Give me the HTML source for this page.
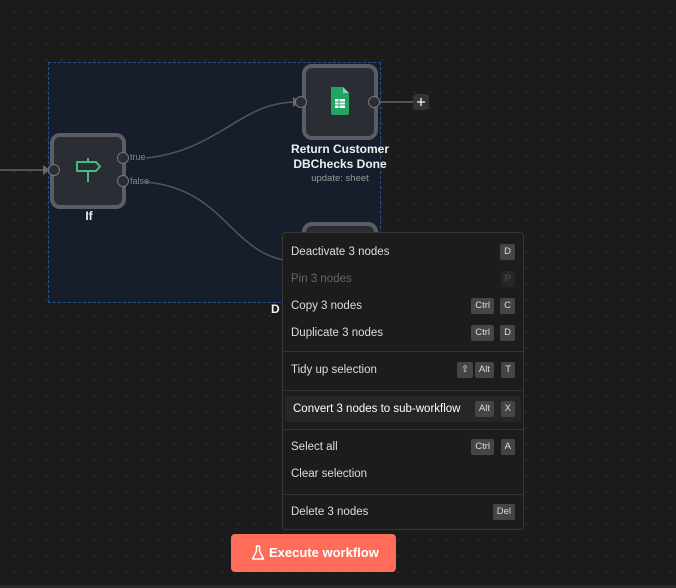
<!DOCTYPE html>
<html><head><meta charset="utf-8"><style>
*{margin:0;padding:0;box-sizing:border-box}
body{width:676px;height:588px;overflow:hidden;background:#1b1b1b;background-image:radial-gradient(#333 0.7px,transparent 1px);background-size:16px 16px;background-position:6px 4px;font-family:"Liberation Sans",sans-serif;position:relative}
.sel{position:absolute;left:48px;top:62px;width:333px;height:241px;background:rgba(22,30,46,.85);border:1px dashed #2a4f8f}
.node{position:absolute;width:76px;height:76px;border-radius:10px;background:#2a2d33;border:4px solid #5a5d63}
.h{position:absolute;width:12px;height:12px;border-radius:50%;background:#2a2d33;border:1.5px solid #777}
.lbl{position:absolute;color:#eee;font-weight:bold;font-size:12px;text-align:center}
.menu{position:absolute;left:282px;top:232px;width:242px;height:298px;background:#1c1c1c;border:1px solid #383838;border-radius:4px;font-size:11.5px;color:#ddd}
.it{position:absolute;left:0;right:0;height:26px;line-height:26px;padding-left:8px}
.k{position:absolute;top:5px;height:16px;line-height:16px;font-size:9.5px;background:#454545;color:#ddd;border-radius:2px;text-align:center;padding:0 4px}
.sep{position:absolute;left:0;right:0;height:1px;background:#333}
</style></head><body>
<div class="sel"></div>
<svg style="position:absolute;left:0;top:0" width="676" height="588">
<path d="M0 170 H46" stroke="#666" stroke-width="1.5" fill="none"/>
<path d="M43 165 L50 170 L43 175Z" fill="#666"/>
<path d="M146 158 C220 150,240 102,296 102" stroke="#555" stroke-width="1.5" fill="none"/>
<path d="M293 97 L301 102 L293 107Z" fill="#666"/>
<path d="M146 182 C230 190,230 260,300 262" stroke="#555" stroke-width="1.5" fill="none"/>
<path d="M380 102 H414" stroke="#666" stroke-width="1.5"/>
<rect x="413" y="94" width="16" height="16" rx="3" fill="#333"/>
<path d="M421 98 V106 M417 102 H425" stroke="#ddd" stroke-width="1.5"/>
</svg>
<div class="node" style="left:50px;top:133px"></div>
<div class="node" style="left:302px;top:64px"></div>
<div class="node" style="left:302px;top:222px"></div>
<div class="h" style="left:48px;top:164px"></div>
<div class="h" style="left:117px;top:152px"></div>
<div class="h" style="left:117px;top:175px"></div>
<div class="h" style="left:295px;top:96px"></div>
<div class="h" style="left:368px;top:96px"></div>
<span style="position:absolute;left:130px;top:152px;font-size:9px;color:#888">true</span>
<span style="position:absolute;left:130px;top:176px;font-size:9px;color:#888">false</span>
<svg style="position:absolute;left:75px;top:157px" width="28" height="26" viewBox="0 0 28 26"><path d="M2 5 H21 L25 9.5 L21 14 H2Z M13 1 V5 M13 14 V25" stroke="#3fbf7f" stroke-width="2" fill="none" stroke-linejoin="round"/></svg>
<svg style="position:absolute;left:329px;top:87px" width="22" height="28" viewBox="0 0 22 28"><path d="M2 0 H14 L20 6 V26 Q20 28 18 28 H4 Q2 28 2 26Z" fill="#21a464"/><path d="M14 0 V6 H20Z" fill="#8ed1b1"/><rect x="6" y="12" width="10" height="9" fill="#fff"/><path d="M6 15 H16 M6 18 H16 M10 12 V21" stroke="#21a464" stroke-width="1"/></svg>
<div class="lbl" style="left:60px;top:209px;width:58px">If</div>
<div class="lbl" style="left:280px;top:142px;width:120px;line-height:15px">Return Customer<br>DBChecks Done</div>
<div style="position:absolute;left:280px;top:173px;width:120px;text-align:center;font-size:9.5px;color:#999">update: sheet</div>
<div class="lbl" style="left:271px;top:302px">D</div>
<div class="menu">
<div class="it" style="top:3px;line-height:32px;height:32px">Deactivate 3 nodes<span class="k" style="right:8px;top:8px">D</span></div>
<div class="it" style="top:30px;line-height:32px;height:32px;color:#666">Pin 3 nodes<span class="k" style="right:8px;top:8px;background:#262626;color:#555">P</span></div>
<div class="it" style="top:57px;line-height:32px;height:32px">Copy 3 nodes<span class="k" style="right:29px;top:8px">Ctrl</span><span class="k" style="right:8px;top:8px">C</span></div>
<div class="it" style="top:84px;line-height:32px;height:32px">Duplicate 3 nodes<span class="k" style="right:29px;top:8px">Ctrl</span><span class="k" style="right:8px;top:8px">D</span></div>
<div class="sep" style="top:118px"></div>
<div class="it" style="top:123px;line-height:28px;height:28px">Tidy up selection<span class="k" style="right:50px;top:6px">⇧</span><span class="k" style="right:29px;top:6px">Alt</span><span class="k" style="right:8px;top:6px">T</span></div>
<div class="sep" style="top:157px"></div>
<div class="it" style="top:163px;background:#262626;left:2px;right:2px;color:#fff">Convert 3 nodes to sub-workflow<span class="k" style="right:6px">X</span><span class="k" style="right:27px">Alt</span></div>
<div class="sep" style="top:196px"></div>
<div class="it" style="top:200px;line-height:28px;height:28px">Select all<span class="k" style="right:29px;top:6px">Ctrl</span><span class="k" style="right:8px;top:6px">A</span></div>
<div class="it" style="top:227px;line-height:28px;height:28px">Clear selection</div>
<div class="sep" style="top:261px"></div>
<div class="it" style="top:266px;line-height:26px;height:26px">Delete 3 nodes<span class="k" style="right:8px">Del</span></div>
</div>
<div style="position:absolute;left:231px;top:534px;width:165px;height:38px;background:#ff6d5a;border-radius:4px;color:#fff;font-weight:bold;font-size:13px;line-height:38px;padding-left:38px">Execute workflow</div>
<svg style="position:absolute;left:251px;top:545px" width="14" height="16" viewBox="0 0 14 16"><path d="M5 1 H9 M5.5 1 V6 L1.5 14 H12.5 L8.5 6 V1" stroke="#fff" stroke-width="1.5" fill="none" stroke-linejoin="round"/></svg>
<div style="position:absolute;left:0;top:585px;width:676px;height:3px;background:#2a2a2a"></div>
</body></html>
